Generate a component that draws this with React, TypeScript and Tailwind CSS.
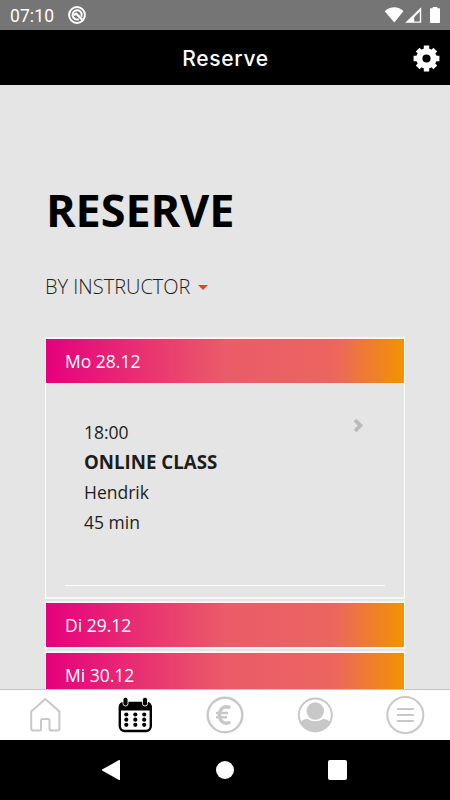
import React from 'react';

interface ClassSlot {
  time: string;
  title: string;
  instructor: string;
  duration: string;
}

interface DayProps {
  label: string;
  slots?: ClassSlot[];
}

const days: DayProps[] = [
  {
    label: 'Mo 28.12',
    slots: [{ time: '18:00', title: 'ONLINE CLASS', instructor: 'Hendrik', duration: '45 min' }]
  },
  { label: 'Di 29.12' },
  { label: 'Mi 30.12' }
];

function StatusBar() {
  return (
    <div className="flex h-[30px] shrink-0 items-center bg-[#757575] pl-2.5 pr-[9px] text-white">
      <span className="font-['Roboto',sans-serif] text-[17.5px] leading-[30px] tracking-[0.1px] pt-[2px]">07:10</span>
      <svg className="ml-[13px]" width="20" height="20" viewBox="0 0 20 20" fill="none" stroke="currentColor">
        <circle cx="10" cy="10" r="7.9" strokeWidth="2" />
        <path d="M11.8 14.2A4.6 4.6 0 1 1 14.4 11.6" strokeWidth="2" />
        <path d="M6.8 10.2l2.4-1.6 7 7" strokeWidth="2.2" />
      </svg>
      <div className="ml-auto flex">
        <svg width="60" height="20" viewBox="0 0 60 20" fill="currentColor">
          <path d="M3.7 6.2C9 .8 17.6.8 22.4 6.2L13.3 17.4z" />
          <path fillRule="evenodd" d="M24.2 17.8L40.2 2.2v15.6zM33.2 16.4h5.6V6.6l-5.6 5.7z" />
          <path d="M51.7 2h4.6v1.2H58c.6 0 1 .4 1 1V17c0 .6-.4 1-1 1h-8c-.6 0-1-.4-1-1V4.2c0-.6.4-1 1-1h1.7z" />
        </svg>
      </div>
    </div>
  );
}

function Header() {
  return (
    <header className="grid h-[55px] shrink-0 grid-cols-[1fr_auto_1fr] items-center bg-black px-2.5 text-white">
      <h1 className="col-start-2 pl-px pt-[2px] font-['Inter',sans-serif] text-[21px] font-medium tracking-[0.7px]">Reserve</h1>
      <button type="button" aria-label="Settings" className="justify-self-end pt-[2px]">
        <svg width="27" height="27" viewBox="0 0 27 27" fill="none" stroke="currentColor">
          <circle cx="13.5" cy="13.5" r="7.2" strokeWidth="6.2" />
          <path
            d="M13.5 .6v4M13.5 22.4v4M.6 13.5h4M22.4 13.5h4M4.7 4.7l2.6 2.6M19.7 19.7l2.6 2.6M4.7 22.3l2.6-2.6M19.7 7.3l2.6-2.6"
            strokeWidth="5.4"
          />
        </svg>
      </button>
    </header>
  );
}

function Slot({ slot }: { slot: ClassSlot }) {
  return (
    <div className="mx-[19px] flex h-[203px] justify-between border-b border-white pl-[19px] pr-[20px] pt-[34px]">
      <div className="text-[17.5px] leading-[30px] text-[#1d1d1b]">
        <p>{slot.time}</p>
        <p className="text-[18.7px] font-bold">{slot.title}</p>
        <p>{slot.instructor}</p>
        <p>{slot.duration}</p>
      </div>
      <svg width="13" height="16" viewBox="0 0 13 16" fill="none" stroke="#b9b9b9" strokeWidth="3.8">
        <path d="M3 3l5.5 5.5L3 14" />
      </svg>
    </div>
  );
}

function Day({ label, slots = [] }: DayProps) {
  return (
    <section className="border-x border-y-2 border-x-white border-y-[#f7f5f5]">
      <h3 className="h-11 bg-[linear-gradient(90deg,#e6007e_0%,#eb5b68_50%,#ec6560_80%,#f39200_100%)] pl-[19px] text-[17.5px] leading-[45px] text-white">
        {label}
      </h3>
      {slots.map((slot) => (
        <Slot key={slot.time} slot={slot} />
      ))}
      {slots.length > 0 && <div className="h-[11px]" />}
    </section>
  );
}

function TabBar() {
  return (
    <nav className="grid h-[51px] shrink-0 grid-cols-5 place-items-center border-t border-[#c4c4c4] bg-white text-[#c8c8c8]">
      <svg width="40" height="40" viewBox="0 0 40 40" fill="none" stroke="currentColor" strokeWidth="2" strokeLinejoin="round">
        <path d="M20.3 4L6.2 16.500V33.500q0 2 2 2h6.300q1.500 0 1.500-1.500V25.500q0-1.500 1.500-1.500h5.500Q24.500 24 24.500 25.500V34q0 1.500 1.500 1.500h6.400q2 0 2-2V16.500z" />
      </svg>
      <svg width="40" height="40" viewBox="0 0 40 40" className="text-black" fill="currentColor">
        <rect x="4.8" y="8" width="31" height="28" rx="5" fill="none" stroke="currentColor" strokeWidth="2.4" />
        <path d="M4 15.5v-4Q4 7 8.5 7H32q4.500 0 4.500 4.500v4z" />
        <rect x="8" y="2.200" width="5" height="8.8" rx="2.5" stroke="white" strokeWidth=".9" />
        <rect x="27.5" y="2.200" width="5" height="8.8" rx="2.5" stroke="white" strokeWidth=".9" />
        {[19.5, 24.7, 29.8].map((y) =>
          [11.3, 20.3, 29.2].map((x) => <circle key={`${x}-${y}`} cx={x} cy={y} r="2.1" />)
        )}
      </svg>
      <svg width="40" height="40" viewBox="0 0 40 40" fill="none" stroke="currentColor">
        <circle cx="20" cy="20" r="17.3" strokeWidth="2.4" />
        <path d="M25.3 12.7C18 9.5 14.5 15 14.5 20s3.5 10.5 10.800 7.300" strokeWidth="3.4" />
        <path d="M11 18h12M11 22.2h11" strokeWidth="2.4" />
      </svg>
      <svg width="40" height="40" viewBox="0 0 40 40" fill="currentColor">
        <circle cx="20.3" cy="20" r="16.5" fill="none" stroke="currentColor" strokeWidth="2" />
        <circle cx="20.3" cy="16" r="8.7" />
        <path d="M4.8 27Q8 24 12.3 23.7Q20.3 29 28.3 23.7Q32 24 35.8 27A17 17 0 0 1 4.8 27z" />
      </svg>
      <svg width="40" height="40" viewBox="0 0 40 40" fill="none" stroke="currentColor">
        <circle cx="20.3" cy="20" r="18" strokeWidth="2" />
        <path d="M12.8 14H28M12.8 20H28M12.8 26H28" strokeWidth="2.2" strokeLinecap="round" />
      </svg>
    </nav>
  );
}

function SystemNav() {
  return (
    <div className="flex h-[60px] shrink-0 items-center justify-center gap-[94px] bg-black pr-px text-white">
      <svg width="20" height="22" viewBox="0 0 20 22" fill="currentColor">
        <path d="M.5 10.3L17 1.1q1-.5 1 .5v18.8q0 1-1 .5L.5 11.7q-1-.7 0-1.4z" />
      </svg>
      <span className="size-[18px] rounded-full bg-white" />
      <span className="h-5 w-[19px] rounded-[2px] bg-white" />
    </div>
  );
}

export default function App() {
  return (
    <div className="flex h-[800px] w-[450px] flex-col overflow-hidden bg-[#e5e5e5] font-['Open_Sans',sans-serif]">
      <StatusBar />
      <Header />
      <main className="min-h-0 flex-1 overflow-hidden px-[45px] pt-[94px]">
        <h2 className="pl-px text-[45px] font-bold leading-[62px] tracking-[-0.1px] text-black">RESERVE</h2>
        <button type="button" className="mt-[31px] flex items-center gap-[7px] text-[20px] font-light leading-[30px] text-[#1d1d1b]">
          BY INSTRUCTOR
          <svg width="10" height="5" viewBox="0 0 10 5" fill="#e8402a">
            <path d="M0 0h10L5 5z" />
          </svg>
        </button>
        <div className="mt-[35px] flex flex-col gap-[2px]">
          {days.map((day) => (
            <Day key={day.label} {...day} />
          ))}
        </div>
      </main>
      <TabBar />
      <SystemNav />
    </div>
  );
}
